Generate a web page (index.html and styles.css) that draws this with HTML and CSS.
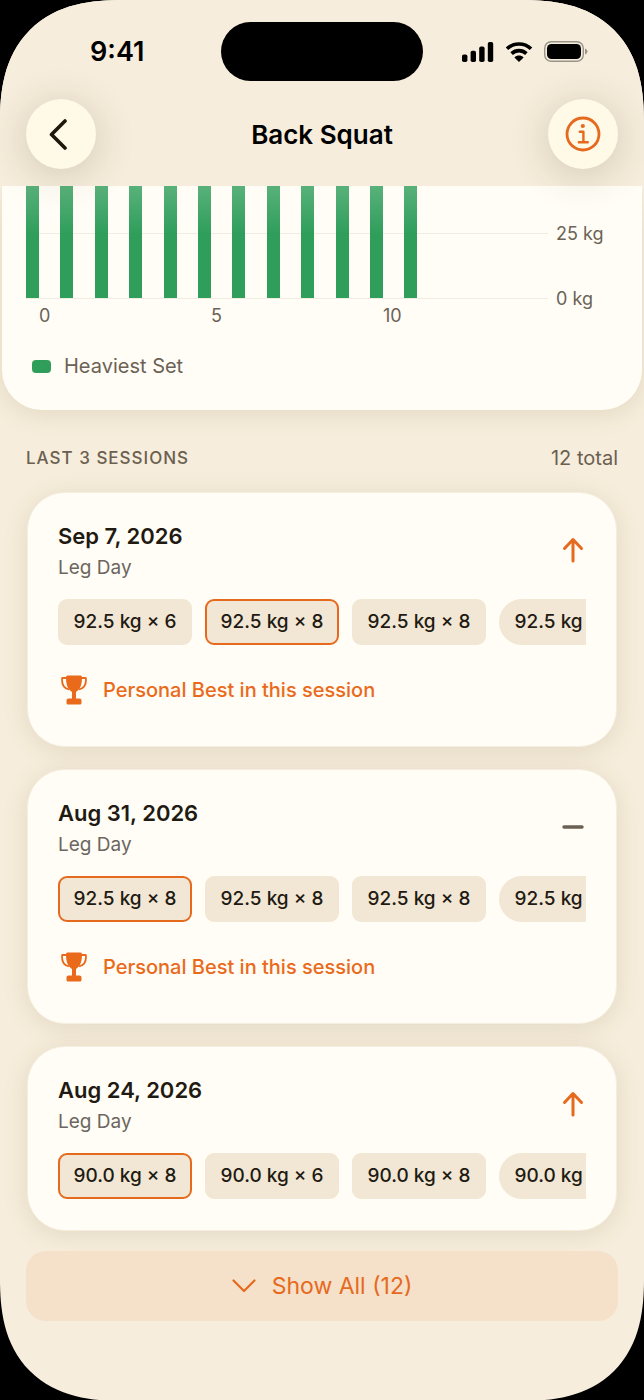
FILE: index.html
```html
<!DOCTYPE html>
<html lang="en">

<head>
    <meta charset="UTF-8">
    <meta name="viewport" content="width=device-width, initial-scale=1.0">
    <title>Back Squat</title>
    <link rel="stylesheet" href="styles.css">
</head>

<body>
    <!-- Shared icons -->
    <svg class="icon-defs" aria-hidden="true">
        <symbol id="icon-up" viewBox="0 0 22 26">
            <path d="M11 24V3M2.500 11.500L11 2.500L19.500 11.500" fill="none" stroke="currentColor" stroke-width="3" stroke-linecap="round" stroke-linejoin="round" />
        </symbol>
        <symbol id="icon-same" viewBox="0 0 22 26">
            <path d="M2 13H20" fill="none" stroke="currentColor" stroke-width="3.400" stroke-linecap="round" />
        </symbol>
        <symbol id="icon-trophy" viewBox="0 0 28 30">
            <path d="M7 3H2.200C1.500 8.500 3 13 9 14.500M21 3H25.800C26.500 8.500 25 13 19 14.500" fill="none" stroke="currentColor" stroke-width="1.800" stroke-linejoin="round" />
            <path d="M7.500 .500H20.500Q22 .500 22 2C22 9.500 20.500 14 16 17V23.500H19.500Q21.500 23.500 21.500 25.500V28Q21.500 29.500 20 29.500H8Q6.500 29.500 6.500 28V25.500Q6.500 23.500 8.500 23.500H12V17C7.500 14 6 9.500 6 2Q6 .500 7.500 .500Z" fill="currentColor" />
        </symbol>
    </svg>

    <div class="phone">
        <header class="top">
            <div class="status-bar">
                <span class="time">9:41</span>
                <span class="island"></span>
                <div class="status-icons">
                    <svg width="32" height="20" viewBox="0 0 32 20">
                        <rect x="0" y="12.500" width="5.400" height="7.500" rx="1.800" />
                        <rect x="8.600" y="8.700" width="5.400" height="11.300" rx="1.800" />
                        <rect x="17.200" y="4.500" width="5.400" height="15.500" rx="1.800" />
                        <rect x="25.800" y="0" width="5.400" height="20" rx="1.800" />
                    </svg>
                    <svg width="28" height="20" viewBox="0 0 28 20">
                        <path d="M2 6.800C8.600 .400 19.400 .400 26 6.800" fill="none" stroke="#000" stroke-width="3.600" />
                        <path d="M6.600 11.600C10.800 7.600 17.200 7.600 21.400 11.600" fill="none" stroke="#000" stroke-width="3.600" />
                        <path d="M14 20L9.400 15.400C12 12.900 16 12.900 18.600 15.400Z" />
                    </svg>
                    <svg width="44" height="22" viewBox="0 0 44 22">
                        <rect x=".700" y=".700" width="38.600" height="19.600" rx="6.500" fill="none" stroke="#99948a" stroke-width="1.400" />
                        <rect x="3" y="3" width="34" height="15" rx="4.500" />
                        <path d="M41 7.500Q43.500 8.500 43.500 10.500T41 13.500Z" fill="#99948a" />
                    </svg>
                </div>
            </div>
            <nav class="nav-bar">
                <button class="round-button" aria-label="Back">
                    <svg width="24" height="32" viewBox="0 0 24 32">
                        <path d="M16 3L2.500 16.500L16 30" fill="none" stroke="#1d180c" stroke-width="3.600" stroke-linecap="round" stroke-linejoin="round" />
                    </svg>
                </button>
                <h1>Back Squat</h1>
                <button class="round-button" aria-label="About this exercise">
                    <svg width="36" height="36" viewBox="0 0 36 36" fill="none" stroke="#e56a1e" stroke-width="2.800">
                        <circle cx="18" cy="18" r="16" />
                        <circle cx="17.800" cy="10" r="2.100" fill="#e56a1e" stroke="none" />
                        <path d="M14.800 15.800H18.400V26M13.800 26.200H22.800" stroke-width="2.400" stroke-linecap="round" stroke-linejoin="round" />
                    </svg>
                </button>
            </nav>
        </header>

        <main>
            <section class="chart-card">
                <div class="chart">
                    <div class="plot">
                        <i></i><i></i><i></i><i></i><i></i><i></i>
                        <i></i><i></i><i></i><i></i><i></i><i></i>
                    </div>
                    <div class="y-axis">
                        <span>25 kg</span>
                        <span>0 kg</span>
                    </div>
                    <div class="x-axis">
                        <span>0</span>
                        <span>5</span>
                        <span>10</span>
                    </div>
                </div>
                <p class="legend"><span class="swatch"></span>Heaviest Set</p>
            </section>

            <section class="sessions">
                <div class="section-head">
                    <h2>Last 3 Sessions</h2>
                    <span>12 total</span>
                </div>

                <article class="session">
                    <div class="session-head">
                        <div>
                            <h3>Sep 7, 2026</h3>
                            <p>Leg Day</p>
                        </div>
                        <svg class="trend"><use href="#icon-up" /></svg>
                    </div>
                    <ul class="sets">
                        <li>92.5 kg × 6</li>
                        <li class="best">92.5 kg × 8</li>
                        <li>92.5 kg × 8</li>
                        <li>92.5 kg × 8</li>
                    </ul>
                    <p class="record"><svg><use href="#icon-trophy" /></svg>Personal Best in this session</p>
                </article>

                <article class="session">
                    <div class="session-head">
                        <div>
                            <h3>Aug 31, 2026</h3>
                            <p>Leg Day</p>
                        </div>
                        <svg class="trend same"><use href="#icon-same" /></svg>
                    </div>
                    <ul class="sets">
                        <li class="best">92.5 kg × 8</li>
                        <li>92.5 kg × 8</li>
                        <li>92.5 kg × 8</li>
                        <li>92.5 kg × 8</li>
                    </ul>
                    <p class="record"><svg><use href="#icon-trophy" /></svg>Personal Best in this session</p>
                </article>

                <article class="session">
                    <div class="session-head">
                        <div>
                            <h3>Aug 24, 2026</h3>
                            <p>Leg Day</p>
                        </div>
                        <svg class="trend"><use href="#icon-up" /></svg>
                    </div>
                    <ul class="sets">
                        <li class="best">90.0 kg × 8</li>
                        <li>90.0 kg × 6</li>
                        <li>90.0 kg × 8</li>
                        <li>90.0 kg × 8</li>
                    </ul>
                </article>

                <button class="show-all">
                    <svg width="24" height="14" viewBox="0 0 24 14">
                        <path d="M1.500 1.500L12 12L22.500 1.500" fill="none" stroke="currentColor" stroke-width="2.200" stroke-linecap="round" stroke-linejoin="round" />
                    </svg>
                    Show All (12)
                </button>
            </section>
        </main>
    </div>
</body>

</html>
```
FILE: styles.css
```css
* {
    box-sizing: border-box;
}

body {
    margin: 0;
    background-color: #000;
    font-family: Inter, "Liberation Sans", sans-serif;
    color: #1f1a12;
}

h1,
h2,
h3,
p,
ul {
    margin: 0;
    padding: 0;
}

button {
    border: none;
    padding: 0;
    font-family: inherit;
    cursor: pointer;
}

.icon-defs {
    position: absolute;
    width: 0;
    height: 0;
}

.phone {
    min-height: 100vh;
    background-color: #f6eddc;
    border-radius: 104px;
    overflow: hidden;
}

@supports (corner-shape: superellipse(1.3)) {
    .phone {
        border-radius: 122px;
        corner-shape: superellipse(1.3);
    }
}

/* Status bar and navigation */
.top {
    position: relative;
    z-index: 1;
    padding: 22px 26px 17px;
    background-color: #f6eddc;
}

.top::after {
    content: "";
    position: absolute;
    top: 100%;
    left: 0;
    right: 0;
    height: 48px;
    background: linear-gradient(rgba(255, 253, 245, 0.2), rgba(255, 253, 245, 0));
    pointer-events: none;
}

.status-bar {
    display: grid;
    grid-template-columns: 1fr 202px 1fr;
    align-items: center;
    height: 59px;
}

.time {
    padding-left: 64px;
    font-size: 27px;
    font-weight: 600;
    color: #000;
}

.island {
    height: 59px;
    background-color: #000;
    border-radius: 30px;
}

.status-icons {
    display: flex;
    align-items: center;
    justify-content: flex-end;
    gap: 11px;
    padding-right: 30px;
}

.nav-bar {
    display: flex;
    align-items: center;
    justify-content: space-between;
    margin-top: 18px;
}

.nav-bar h1 {
    font-size: 26px;
    font-weight: 600;
    color: #000;
}

.round-button {
    display: flex;
    align-items: center;
    justify-content: center;
    width: 70px;
    height: 70px;
    border-radius: 50%;
    background-color: #fff9e8;
    box-shadow: 0 6px 40px rgba(60, 45, 20, 0.2);
}

/* Chart */
.chart-card {
    margin: 0 2px;
    padding: 0 24px 30px;
    background-color: #fffdf5;
    border-radius: 0 0 40px 40px;
    box-shadow: 0 4px 24px rgba(110, 90, 40, 0.14);
}

.chart {
    display: grid;
    grid-template-columns: 1fr 62px;
    column-gap: 8px;
    font-size: 18px;
    line-height: 22px;
    color: #6b6255;
}

.plot,
.x-axis {
    display: grid;
    grid-template-columns: repeat(15, 1fr);
    padding-right: 6px;
}

.plot {
    height: 113px;
    border-bottom: 1px solid #efece2;
    background: linear-gradient(#efece2, #efece2) 0 47px / 100% 1px no-repeat;
}

.plot i {
    width: 13px;
    background-color: #2f9e5b;
}

.y-axis {
    display: flex;
    flex-direction: column;
    justify-content: space-between;
    padding-top: 37px;
    margin-bottom: -11px;
}

.x-axis {
    padding-top: 6px;
}

.x-axis span {
    grid-column: 1;
    grid-row: 1;
    padding-left: 13px;
}

.x-axis span:nth-child(2) {
    grid-column: 6;
}

.x-axis span:nth-child(3) {
    grid-column: 11;
}

.legend {
    display: flex;
    align-items: center;
    gap: 13px;
    margin-top: 25px;
    padding-left: 6px;
    font-size: 20px;
    line-height: 28px;
    color: #6b6255;
}

.swatch {
    width: 19px;
    height: 13px;
    border-radius: 4px;
    background-color: #2f9e5b;
}

/* Sessions */
.sessions {
    padding: 34px 26px 80px;
}

.section-head {
    display: flex;
    align-items: center;
    justify-content: space-between;
    margin-bottom: 20px;
    font-size: 20px;
    line-height: 28px;
    color: #6b5f50;
}

.section-head h2 {
    font-size: 17px;
    font-weight: 500;
    letter-spacing: 1px;
    text-transform: uppercase;
}

.session {
    margin: 0 1px 22px;
    padding: 29px 30px 31px;
    border: 1px solid #f5efe2;
    border-radius: 38px;
    background-color: #fffdf5;
    box-shadow: 0 4px 24px rgba(110, 90, 40, 0.14);
}

.session-head {
    display: flex;
    align-items: center;
    justify-content: space-between;
    margin-bottom: 17px;
}

.session h3 {
    font-size: 22px;
    font-weight: 600;
    line-height: 28px;
}

.session-head p {
    margin-top: 4px;
    font-size: 19px;
    line-height: 28px;
    color: #6b6660;
}

.trend {
    width: 22px;
    height: 26px;
    margin: 0 2px 4px 0;
    color: #e56a1e;
}

.trend.same {
    color: #6b6054;
}

.sets {
    display: flex;
    gap: 13px;
    overflow-x: auto;
    scrollbar-width: none;
    list-style: none;
}

.sets li {
    flex: none;
    width: 134px;
    border: 2px solid #f1e7d4;
    border-radius: 9px;
    background-color: #f1e7d4;
    font-size: 19px;
    font-weight: 500;
    line-height: 42px;
    text-align: center;
    white-space: nowrap;
}

.sets li:last-child {
    border-radius: 23px;
}

.sets .best {
    border-color: #e56a1e;
}

.record {
    display: flex;
    align-items: center;
    gap: 15px;
    margin: 30px 0 10px 2px;
    font-size: 20px;
    font-weight: 500;
    line-height: 30px;
    color: #ea6a1c;
}

.record svg {
    width: 28px;
    height: 30px;
}

.show-all {
    display: flex;
    align-items: center;
    justify-content: center;
    gap: 16px;
    width: 100%;
    height: 70px;
    margin-top: -2px;
    border-radius: 20px;
    background-color: #f5e0c9;
    font-size: 23px;
    color: #e56a1e;
}
```
